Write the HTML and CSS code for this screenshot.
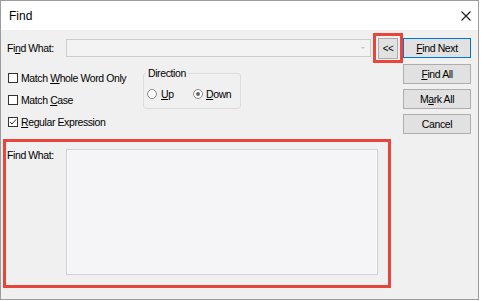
FILE: index.html
```html
<!DOCTYPE html>
<html>
<head>
<meta charset="utf-8">
<link rel="stylesheet" href="styles.css">
</head>
<body>
<div class="window">
  <div class="titlebar">
    <span class="title">Find</span>
    <svg class="close" width="10" height="10" viewBox="0 0 10 10"><path d="M0.5 0.5 L9.5 9.5 M9.5 0.5 L0.5 9.5" stroke="#1a1a1a" stroke-width="1.1" fill="none"/></svg>
  </div>
  <div class="content">
    <div class="top">
      <div class="leftcol">
        <div class="findrow">
          <span class="lbl">Fi<u>n</u>d What:</span>
          <div class="combo"><span class="arrow"></span></div>
          <div class="mark-sm"><div class="btn small">&lt;&lt;</div></div>
        </div>
        <div class="options">
          <div class="checks">
            <div class="chk"><span class="box"></span><span>Match <u>W</u>hole Word Only</span></div>
            <div class="chk"><span class="box"></span><span>Match <u>C</u>ase</span></div>
            <div class="chk"><span class="box"><svg width="8" height="8" viewBox="0 0 8 8"><path d="M1 4 L3 6 L7 1.5" stroke="#333" stroke-width="1" fill="none"/></svg></span><span><u>R</u>egular Expression</span></div>
          </div>
          <fieldset class="dir">
            <legend>Direction</legend>
            <div class="radios">
              <span class="radio"></span><span class="rl"><u>U</u>p</span>
              <span class="radio on"></span><span class="rl2"><u>D</u>own</span>
            </div>
          </fieldset>
        </div>
      </div>
      <div class="btncol">
        <div class="btn default"><u>F</u>ind Next</div>
        <div class="btn g6"><u>F</u>ind All</div>
        <div class="btn g5">M<u>a</u>rk All</div>
        <div class="btn g5">Cancel</div>
      </div>
    </div>
    <div class="section">
      <span class="lbl2">Find What:</span>
      <div class="textarea"></div>
    </div>
  </div>
</div>
</body>
</html>
```
FILE: styles.css
```css
* { box-sizing: border-box; }
html, body { margin: 0; padding: 0; background: #ffffff; }
body {
  font-family: "Liberation Sans", Arial, sans-serif;
  font-size: 10.5px;
  letter-spacing: -0.4px;
  color: #000;
}
.window {
  width: 479px;
  height: 300px;
  border: 1px solid #9c9c9c;
  display: flex;
  flex-direction: column;
  background: #f0f0f0;
}
.titlebar {
  height: 29px;
  background: #ffffff;
  display: flex;
  align-items: center;
  padding-left: 8px;
  padding-right: 6px;
}
.title { font-size: 12px; letter-spacing: 0; flex: 1; }
.close { display: block; margin-right: 1px; }
.content {
  flex: 1;
  padding: 8px 7px 0 6px;
  display: flex;
  flex-direction: column;
}
.top { display: flex; }
.leftcol { flex: 1; display: flex; flex-direction: column; }
.findrow { display: flex; align-items: center; height: 20px; }
.lbl { width: 59px; }
.combo {
  flex: 1;
  height: 18px;
  border: 1px solid #cccccc;
  background: #f3f3f3;
  position: relative;
}
.arrow {
  position: absolute;
  right: 5px;
  top: 7px;
  width: 0; height: 0;
  border-left: 2px solid transparent;
  border-right: 2px solid transparent;
  border-top: 2px solid #c4c4c4;
}
.mark-sm {
  margin-left: 2px;
  width: 30px;
  height: 30px;
  margin-top: -5px;
  margin-bottom: -5px;
  border: 3px solid #e8453c;
  display: flex;
  align-items: center;
  justify-content: center;
}
.btn {
  height: 20px;
  border: 1px solid #adadad;
  background: #e1e1e1;
  display: flex;
  align-items: center;
  justify-content: center;
}
.btn.small { width: 20px; height: 21px; font-size: 10px; letter-spacing: -0.5px; }
.btn.default { border-color: #0078d7; }
.btncol { width: 68px; display: flex; flex-direction: column; }
.g6 { margin-top: 6px; }
.g5 { margin-top: 5px; }
.options { display: flex; margin-top: 9px; }
.checks { margin-left: 1px; width: 135px; display: flex; flex-direction: column; }
.chk { height: 22px; display: flex; align-items: center; }
.box {
  width: 10px; height: 10px;
  border: 1px solid #333333;
  background: #ffffff;
  margin-right: 3px;
  display: flex; align-items: center; justify-content: center;
}
.box svg { display: block; }
.dir {
  margin: 0;
  width: 98px;
  height: 42px;
  padding: 0 3px 4px 3px;
  border: 1px solid #dcdcdc;
  border-radius: 3px;
  min-width: 0;
}
.dir legend { padding: 0 2px; line-height: 13px; margin-left: -1px; }
.radios { display: flex; align-items: center; height: 20px; margin-top: 4px; }
.radio {
  width: 10px; height: 10px;
  border: 1px solid #8a8a8a;
  border-radius: 50%;
  background: #ffffff;
  display: flex; align-items: center; justify-content: center;
}
.radio.on::after {
  content: "";
  width: 4px; height: 4px;
  border-radius: 50%;
  background: #6a6a6a;
}
.rl { margin-left: 4px; width: 32px; }
.rl2 { margin-left: 3px; }
.section {
  margin-top: 5px;
  margin-left: -4px;
  width: 388px;
  height: 149px;
  border: 3px solid #e8453c;
  padding: 7px 0 0 1px;
  display: flex;
  align-items: flex-start;
}
.lbl2 { width: 59px; line-height: 13px; }
.textarea {
  width: 312px;
  height: 126px;
  border: 1px solid #d2d2d6;
  background: #f5f5f7;
  box-shadow: inset 0 0 0 1px #fafafb;
}
```
